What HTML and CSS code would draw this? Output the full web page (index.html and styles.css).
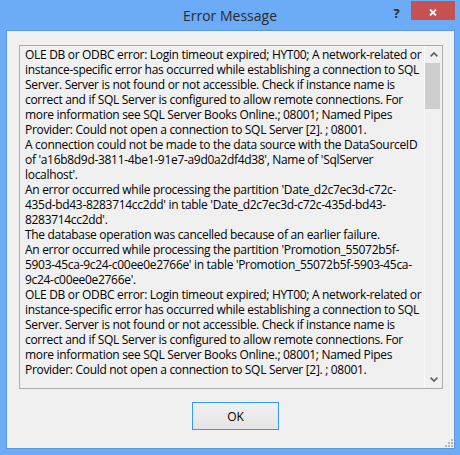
FILE: index.html
```html
<!DOCTYPE html>
<html lang="en">
<head>
<meta charset="utf-8">
<title>Error Message</title>
<link rel="stylesheet" href="styles.css">
</head>
<body>
<div class="frame">
  <div class="titlebar">
    <div class="spacer"></div>
    <div class="title">Error Message</div>
    <div class="controls">
      <div class="help">?</div>
      <div class="close">
        <svg width="8" height="7" viewBox="0 0 8 7"><path d="M1 0.5 L7 6.5 M7 0.5 L1 6.5" stroke="#fff" stroke-width="1.8" fill="none"/></svg>
      </div>
    </div>
  </div>
  <div class="client">
    <div class="msgbox">
      <div class="text">
        <p>OLE DB or ODBC error: Login timeout expired; HYT00; A network-related or<br>instance-specific error has occurred while establishing a connection to SQL<br>Server. Server is not found or not accessible. Check if instance name is<br>correct and if SQL Server is configured to allow remote connections. For<br>more information see SQL Server Books Online.; 08001; Named Pipes<br>Provider: Could not open a connection to SQL Server [2]. ; 08001.</p>
        <p>A connection could not be made to the data source with the DataSourceID<br>of 'a16b8d9d-3811-4be1-91e7-a9d0a2df4d38', Name of 'SqlServer<br>localhost'.</p>
        <p>An error occurred while processing the partition 'Date_d2c7ec3d-c72c-<br>435d-bd43-8283714cc2dd' in table 'Date_d2c7ec3d-c72c-435d-bd43-<br>8283714cc2dd'.</p>
        <p>The database operation was cancelled because of an earlier failure.</p>
        <p>An error occurred while processing the partition 'Promotion_55072b5f-<br>5903-45ca-9c24-c00ee0e2766e' in table 'Promotion_55072b5f-5903-45ca-<br>9c24-c00ee0e2766e'.</p>
        <p>OLE DB or ODBC error: Login timeout expired; HYT00; A network-related or<br>instance-specific error has occurred while establishing a connection to SQL<br>Server. Server is not found or not accessible. Check if instance name is<br>correct and if SQL Server is configured to allow remote connections. For<br>more information see SQL Server Books Online.; 08001; Named Pipes<br>Provider: Could not open a connection to SQL Server [2]. ; 08001.</p>
      </div>
      <div class="scrollbar">
        <div class="arrow">
          <svg width="8" height="5" viewBox="0 0 8 5"><path d="M0.6 4.4 L4 1 L7.4 4.4" stroke="#606060" stroke-width="1.7" fill="none"/></svg>
        </div>
        <div class="track"><div class="thumb"></div></div>
        <div class="arrow">
          <svg width="8" height="5" viewBox="0 0 8 5"><path d="M0.6 0.6 L4 4 L7.4 0.6" stroke="#606060" stroke-width="1.7" fill="none"/></svg>
        </div>
      </div>
    </div>
    <div class="actions">
      <button class="ok" type="button">OK</button>
    </div>
    <svg class="grip" width="8" height="8" viewBox="0 0 8 8">
      <rect x="6" y="0" width="2" height="2"/>
      <rect x="3" y="3" width="2" height="2"/>
      <rect x="6" y="3" width="2" height="2"/>
      <rect x="0" y="6" width="2" height="2"/>
      <rect x="3" y="6" width="2" height="2"/>
      <rect x="6" y="6" width="2" height="2"/>
    </svg>
  </div>
</div>
</body>
</html>
```
FILE: styles.css
```css
html, body {
  margin: 0;
  padding: 0;
}
body {
  background: #6cabf6;
  font-family: "Open Sans", "Noto Sans", "Liberation Sans", sans-serif;
}
.frame {
  width: 460px;
  height: 455px;
  display: flex;
  flex-direction: column;
  background: #6cabf6;
}
.titlebar {
  height: 30px;
  display: grid;
  grid-template-columns: 74px 1fr 74px;
}
.title {
  text-align: center;
  font-size: 14px;
  line-height: 28px;
  padding-top: 2px;
  color: #2a2a2a;
}
.controls {
  display: flex;
  align-items: flex-start;
}
.help {
  width: 25px;
  padding-right: 4px;
  box-sizing: border-box;
  text-align: center;
  font-weight: bold;
  font-size: 13px;
  line-height: 20px;
  padding-top: 3px;
  color: #2a2a2a;
}
.close {
  width: 44px;
  height: 19px;
  margin-top: 1px;
  background: #c75050;
  display: flex;
  justify-content: center;
  align-items: flex-start;
  padding-top: 8px;
  box-sizing: border-box;
}
.close svg {
  display: block;
}
.client {
  position: relative;
  flex: 1;
  margin: 0 5px 6px 6px;
  border: 1px solid #5a97df;
  background: #f0f0f0;
  padding: 14px 11px 0 12px;
}
.msgbox {
  height: 344px;
  box-sizing: border-box;
  border: 1px solid #acacac;
  display: flex;
}
.text {
  flex: 1;
  overflow: hidden;
  padding: 1px 0 0 5px;
  font-size: 12px;
  line-height: 15px;
  letter-spacing: -0.31px;
  color: #000;
  white-space: nowrap;
}
.text p {
  margin: 0;
}
.scrollbar {
  width: 17px;
  border-left: 1px solid #fafafa;
  display: flex;
  flex-direction: column;
}
.arrow {
  height: 17px;
  display: flex;
  align-items: center;
  justify-content: center;
}
.arrow svg {
  display: block;
}
.track {
  flex: 1;
}
.thumb {
  width: 15px;
  height: 46px;
  background: #cdcdcd;
}
.actions {
  padding: 13px 0 0 173px;
}
.ok {
  display: block;
  width: 87px;
  height: 28px;
  margin: 0;
  padding: 0;
  border: 1px solid #3399ff;
  background: linear-gradient(#f0f0f0, #e5e5e5);
  font-family: "Open Sans", "Noto Sans", "Liberation Sans", sans-serif;
  font-size: 12px;
  color: #000;
}
.grip {
  position: absolute;
  right: 1px;
  bottom: 1px;
  fill: #b8b8b8;
}
```
